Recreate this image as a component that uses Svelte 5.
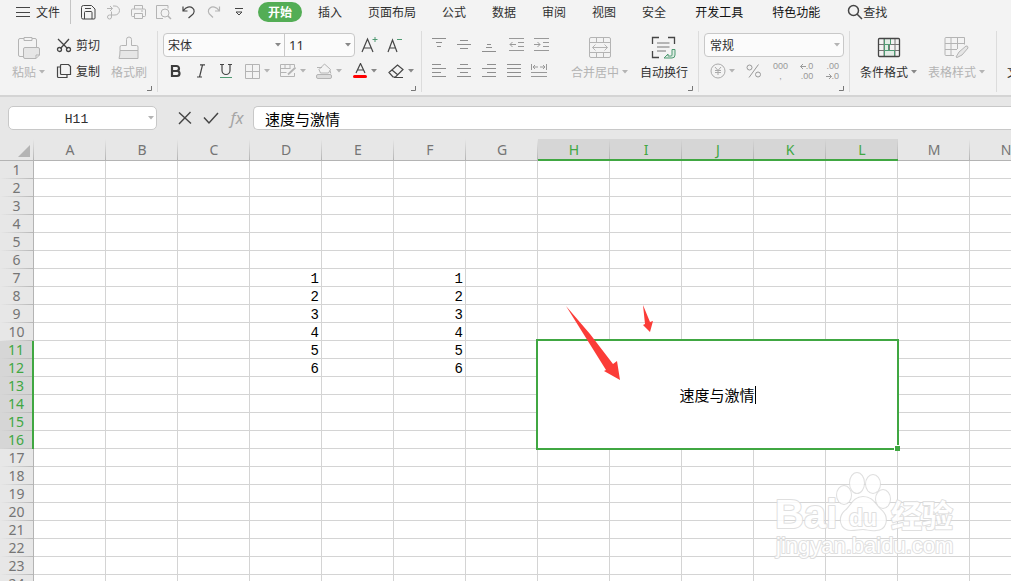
<script>
  const G = '#b4b4b4';
  const D = '#454545';
  const icons = {
    menu: [14, 12, `<path d="M0 1.500h14M0 6.500h14M0 10.500h14" stroke="${D}"/>`],
    save: [15, 15, `<path d="M2.500 .5h8l3.500 3.500v9a1 1 0 0 1-1 1H2a1.500 1.500 0 0 1-1.500-1.500v-10a2 2 0 0 1 2-2zM3.500 14V7.500a1 1 0 0 1 1-1H10a1 1 0 0 1 1 1V14M4 3.500h6" stroke="${D}"/>`],
    exportPdf: [15, 15, `<path d="M1 3.500h5M4 1l2.500 2.500L4 6M7 1h2a4.500 4.500 0 0 1 0 9H3.500a2 2 0 1 0 2 2V6.500" stroke="${G}"/>`],
    print: [15, 15, `<path d="M3.500 4V.5h8V4M3 11.500H1.500a1 1 0 0 1-1-1V5a1 1 0 0 1 1-1h12a1 1 0 0 1 1 1v5.500a1 1 0 0 1-1 1H12M3.500 8.500h8v5h-8zM10 6h2" stroke="${G}"/>`],
    preview: [16, 15, `<path d="M4 13.500H.5V.5h11.500v3M.5 13.500H7" stroke="${G}"/><circle cx="9" cy="8" r="4" stroke="${G}"/><path d="M12 11l3 3" stroke="${G}" stroke-width="1.500"/>`],
    undo: [14, 14, `<path d="M1 1.500V6h4.500M1.500 5.500C4 2 8 1 10.500 3s2 5-.5 7L6.500 13" stroke="${D}" stroke-width="1.200"/>`],
    redo: [14, 14, `<path d="M12.500 1.500V6H8M12 5.500C9.500 2 5.500 1 3 3s-2 5 .5 7L6 12.500" stroke="${G}" stroke-width="1.200"/>`],
    more: [8, 10, `<path d="M0 1.500h8M1 5l3 3 3-3z" stroke="${D}"/>`],
    search: [16, 16, `<circle cx="6.500" cy="6.500" r="5" stroke="${D}" stroke-width="1.500"/><path d="M10 10l5 5" stroke="${D}" stroke-width="1.500"/>`],
    paste: [24, 24, `<path d="M7 2.500H3a1.500 1.500 0 0 0-1.500 1.500v15A1.500 1.500 0 0 0 3 20.500h3.500M15 2.500h3A1.500 1.500 0 0 1 19.500 4v7M7 1.500h8v3H7z" stroke="${G}"/><path d="M8 11.500h13a1.500 1.500 0 0 1 1.500 1.500v6l-3.500 3.500H8A1.500 1.500 0 0 1 6.500 21v-8A1.500 1.500 0 0 1 8 11.500zM22.500 19H19v3.500" stroke="${G}" fill="#e6e6e6"/>`],
    cut: [16, 15, `<path d="M2 1l9.500 9.500M13 1L4.500 10.500" stroke="${D}" stroke-width="1.300"/><circle cx="3.500" cy="11.500" r="2" stroke="${D}" stroke-width="1.300"/><circle cx="12.500" cy="11.500" r="2" stroke="${D}" stroke-width="1.300"/>`],
    copy: [16, 16, `<path d="M5.500 1.500h7l2 2v8h-9a1 1 0 0 1-1-1v-8a1 1 0 0 1 1-1z" stroke="${D}" stroke-width="1.200"/><path d="M4 4H1.500v9.500a1 1 0 0 0 1 1H11V12" stroke="${D}" stroke-width="1.200"/>`],
    painter: [22, 24, `<path d="M8.500 9.500v-6a2.500 2.500 0 0 1 5 0v6h5a1.500 1.500 0 0 1 1.500 1.500v3.500H2V11A1.500 1.500 0 0 1 3.500 9.500z" stroke="${G}"/><path d="M2 14.500h18v8H1q1-3 1-8z" stroke="${G}" fill="#e6e6e6"/>`],
    bigA: [17, 18, `<path d="M1 16L6.500 3 12 16M3 12h7" stroke="${D}" stroke-width="1.200"/><path d="M14 1v5M11.500 3.500h5" stroke="#4f9a72"/>`],
    smallA: [16, 18, `<path d="M1 16L5.500 4 10 16M2.500 12h6" stroke="${D}" stroke-width="1.200"/><path d="M10 3.500h5" stroke="#4f9a72"/>`],
    bold: [12, 14, `<path d="M2 2h4.500a2.300 2.300 0 0 1 0 5H2zM2 7h5a2.500 2.500 0 0 1 0 5H2z" stroke="#3c3c3c" stroke-width="2.200"/>`],
    italic: [10, 14, `<path d="M4 .8h5M1 13h5M6.500 1l-3 12" stroke="${D}" stroke-width="1.200"/>`],
    underline: [12, 15, `<path d="M2 .5v6a4 4 0 0 0 8 0v-6M0 .5h4M8 .5h4" stroke="${D}" stroke-width="1.200"/><path d="M0 13.500h12" stroke="#4f9a72"/>`],
    borders: [16, 15, `<path d="M.5 .5h14v14H.5zM7.500 .5v14M.5 7.500h14" stroke="${G}"/>`],
    drawBorder: [17, 16, `<path d="M14.500 4V1.500H.5v12h14V10M.5 5.500h10M.5 9.500h6M5 1.500v4M10 1.500v4" stroke="${G}"/><path d="M8 11.500l7.500-7" stroke="${G}" stroke-width="1.800"/>`],
    fill: [17, 16, `<path d="M1 4.500h5M3 6.500L8.500 1l6 5.500-2 3.500H4.500zM14 7.500l.8 3" stroke="${G}"/><rect x=".5" y="11.500" width="15" height="4" rx="1.500" fill="#dcdcdc" stroke="${G}"/>`],
    fontColor: [15, 16, `<path d="M3 10L7.500 .5 12 10M4.500 7h6" stroke="${D}" stroke-width="1.200"/><rect y="12" width="14" height="3" rx="1.500" fill="#f00"/>`],
    eraser: [17, 15, `<path d="M1 8.500L9.500 1l5.500 4.500L7.500 13H5zM4 6l6 5M6 13.500h9" stroke="${D}" stroke-width="1.200"/>`],
    vTop: [14, 14, `<path d="M0 .5h14M4 4.500h6M5 8.500h4" stroke="#8e8e8e"/>`],
    vMid: [14, 14, `<path d="M3 2.500h8M0 6.500h14M3 10.500h8" stroke="#8e8e8e"/>`],
    vBot: [14, 14, `<path d="M5 6.500h4M4 9.500h6M0 13.500h14" stroke="#8e8e8e"/>`],
    outdent: [15, 14, `<path d="M0 .5h15M9 4.500h6M9 8.500h6M0 12.500h15M1 6.500h6M3.500 4L1 6.500 3.500 9" stroke="#999"/>`],
    indent: [15, 14, `<path d="M0 .5h15M9 4.500h6M9 8.500h6M0 12.500h15M0 6.500h6M3.500 4L6 6.500 3.500 9" stroke="#999"/>`],
    hLeft: [14, 14, `<path d="M0 .5h9M0 4.500h14M0 8.500h9M0 12.500h14" stroke="#8e8e8e"/>`],
    hMid: [14, 14, `<path d="M3 .5h8M0 4.500h14M3 8.500h8M0 12.500h14" stroke="#8e8e8e"/>`],
    hRight: [14, 14, `<path d="M5 .5h9M0 4.500h14M5 8.500h9M0 12.500h14" stroke="#8e8e8e"/>`],
    justify: [14, 14, `<path d="M0 .5h14M0 4.500h14M0 8.500h14M0 12.500h14" stroke="#8e8e8e"/>`],
    spread: [16, 14, `<path d="M.5 0v6M15.500 0v6M2 3h5M4 1L2 3l2 2M9 3h5M12 1l2 2-2 2M0 8.500h16M0 12.500h16" stroke="#999"/>`],
    merge: [24, 24, `<rect x="1.500" y="1.500" width="21" height="20" rx="1.500" stroke="${G}"/><path d="M1.500 6.500h21M1.500 16.500h21M8.500 1.500v5M15.500 1.500v5M8.500 16.500v5M15.500 16.500v5M4.500 11.500h15M7.500 8.500l-3 3 3 3M16.500 8.500l3 3-3 3" stroke="${G}"/>`],
    wrap: [26, 24, `<path d="M1.500 8V1.500H8M17 1.500h6.500V8M1.500 15v6.500H8" stroke="${D}" stroke-width="1.300"/><path d="M6 7h12.500M6 11h12.500M6 15h9" stroke="#777"/><path d="M21 13.500h3V19q0 3-3 3h-8l4-4v2h3q1 0 1-1z" stroke="#4f9a72" fill="#dcebe2"/>`],
    yen: [16, 16, `<circle cx="8" cy="8" r="7" stroke="#aaa"/><path d="M5 4l3 3.500L11 4M8 7.500V12M5 7.500h6M5 9.500h6" stroke="#aaa"/>`],
    percent: [16, 16, `<path d="M12.500 1.500L3 14.500" stroke="#999"/><circle cx="3.500" cy="4.500" r="2.500" stroke="#999"/><circle cx="12" cy="11.500" r="2.500" stroke="#999"/>`],
    toLeft: [6, 5, `<path d="M6 2.500H.5M3 0L.5 2.500 3 5" stroke="#999"/>`],
    toRight: [6, 5, `<path d="M0 2.500h5.500M3 0l2.500 2.500L3 5" stroke="#999"/>`],
    condFormat: [24, 22, `<path d="M2 7.500h20M2 13.500h20M7 2v17M18 2v17M12.500 2v17" stroke="#777"/><path d="M7.500 1.500h6v6h-6zM7.500 7.500h4v6h-4zM7.500 13.500h10v6h-10z" fill="#e2ece6" stroke="#4f9a72"/><rect x="1.500" y="1.500" width="21" height="18" rx="1" stroke="${D}" stroke-width="1.300"/>`],
    tableStyle: [26, 24, `<path d="M10 19.500H2a1 1 0 0 1-1-1v-16a1 1 0 0 1 1-1h18.500v7M1 7.500h19M1 13.500h12M7 2v17M13.500 2v11" stroke="${G}"/><path d="M12 21l3-5 7-6q2-.5 2 2l-6 7-5 2.500z" fill="#e6e6e6" stroke="${G}"/>`],
    cancel: [14, 14, `<path d="M1 1.500l12 11M12.500 1L1 13" stroke="${D}" stroke-width="1.400"/>`],
    check: [16, 14, `<path d="M1 6.500L6 12 15 2" stroke="${D}" stroke-width="1.500"/>`]
  };

  const quick = [
    ['save', '保存'], ['exportPdf', '输出为PDF'], ['print', '打印'], ['preview', '打印预览'],
    ['undo', '撤销'], ['redo', '恢复'], ['more', '自定义']
  ];
  const tabs = ['插入', '页面布局', '公式', '数据', '审阅', '视图', '安全'];
  const extraTabs = ['开发工具', '特色功能'];
  const fontTools = [['borders', '边框', true], ['drawBorder', '绘图边框', true], ['fill', '填充颜色', true], ['fontColor', '字体颜色', false], ['eraser', '清除', false]];
  const alignTop = [['vTop', '顶端对齐'], ['vMid', '垂直居中'], ['vBot', '底端对齐']];
  const indents = [['outdent', '减少缩进'], ['indent', '增加缩进']];
  const alignBottom = [['hLeft', '左对齐'], ['hMid', '水平居中'], ['hRight', '右对齐'], ['justify', '两端对齐'], ['spread', '分散对齐']];

  const cols = 'ABCDEFGHIJKLMN'.split('');
  const rows = Array.from({ length: 24 }, (_, i) => i + 1);
  const isCol = (c) => c >= 'H' && c <= 'L';
  const isRow = (r) => r >= 11 && r <= 16;
  const value = (c, r) => ((c === 'D' || c === 'F') && r >= 7 && r <= 12 ? r - 6 : '');

  let nameBox = $state('H11');
  let content = $state('速度与激情');
</script>

{#snippet icon(name)}
  <svg class="icon" width={icons[name][0]} height={icons[name][1]} viewBox="0 0 {icons[name][0]} {icons[name][1]}" fill="none" aria-hidden="true">{@html icons[name][2]}</svg>
{/snippet}

{#snippet caret()}
  <svg class="caret" width="6" height="4" viewBox="0 0 6 4" aria-hidden="true"><path d="M0 0h6L3 3.500z" fill="currentColor" /></svg>
{/snippet}

{#snippet corner()}
  <svg class="corner" width="5" height="5" viewBox="0 0 5 5" fill="none" aria-hidden="true"><path d="M4.500 0v4.500H0" stroke="#777" /></svg>
{/snippet}

<div class="app">
  <nav class="menubar">
    <button class="file">{@render icon('menu')}文件</button>
    <div class="quick">
      {#each quick as [name, label]}
        <button aria-label={label}>{@render icon(name)}</button>
      {/each}
    </div>
    <button class="active">开始</button>
    <div class="tabs">
      {#each tabs as tab}<button>{tab}</button>{/each}
    </div>
    <div class="tabs extra">
      {#each extraTabs as tab}<button>{tab}</button>{/each}
    </div>
    <button class="find">{@render icon('search')}查找</button>
  </nav>

  <div class="ribbon">
    <section class="group clipboard">
      <button class="big dim">{@render icon('paste')}<span>粘贴{@render caret()}</span></button>
      <div class="stack">
        <button class="small">{@render icon('cut')}剪切</button>
        <button class="small">{@render icon('copy')}复制</button>
      </div>
      <button class="big dim">{@render icon('painter')}<span>格式刷</span></button>
      {@render corner()}
    </section>

    <section class="group font">
      <div class="stack">
        <div class="line">
          <div class="pair">
            <label class="pick family"><select aria-label="字体"><option>宋体</option></select>{@render caret()}</label>
            <label class="pick size"><select aria-label="字号"><option>11</option></select>{@render caret()}</label>
          </div>
          <button class="tool" aria-label="增大字号">{@render icon('bigA')}</button>
          <button class="tool" aria-label="减小字号">{@render icon('smallA')}</button>
        </div>
        <div class="line">
          <button class="tool" aria-label="加粗">{@render icon('bold')}</button>
          <button class="tool" aria-label="倾斜">{@render icon('italic')}</button>
          <button class="tool" aria-label="下划线">{@render icon('underline')}</button>
          <div class="splits">
            {#each fontTools as [name, label, dim]}
              <button class="split" class:dim aria-label={label}>{@render icon(name)}{@render caret()}</button>
            {/each}
          </div>
        </div>
      </div>
      {@render corner()}
    </section>

    <section class="group align">
      <div class="stack">
        <div class="line spaced">
          <div class="line">
            {#each alignTop as [name, label]}<button class="tool" aria-label={label}>{@render icon(name)}</button>{/each}
          </div>
          <div class="line">
            {#each indents as [name, label]}<button class="tool" aria-label={label}>{@render icon(name)}</button>{/each}
          </div>
        </div>
        <div class="line">
          {#each alignBottom as [name, label]}<button class="tool" aria-label={label}>{@render icon(name)}</button>{/each}
        </div>
      </div>
      <button class="big dim">{@render icon('merge')}<span>合并居中{@render caret()}</span></button>
      <button class="big">{@render icon('wrap')}<span>自动换行</span></button>
      {@render corner()}
    </section>

    <section class="group number">
      <div class="stack">
        <div class="line">
          <label class="pick format"><select aria-label="数字格式"><option>常规</option></select>{@render caret()}</label>
        </div>
        <div class="line digits">
          <button class="split dim" aria-label="货币">{@render icon('yen')}{@render caret()}</button>
          <button class="tool" aria-label="百分比">{@render icon('percent')}</button>
          <button class="places"><span>000</span><span>,</span></button>
          <button class="places end"><span>{@render icon('toLeft')}.0</span><span>.00</span></button>
          <button class="places end"><span>.00</span><span>{@render icon('toRight')}.0</span></button>
        </div>
      </div>
      {@render corner()}
    </section>

    <section class="group style">
      <button class="big">{@render icon('condFormat')}<span>条件格式{@render caret()}</span></button>
      <button class="big dim">{@render icon('tableStyle')}<span>表格样式{@render caret()}</span></button>
    </section>

    <section class="group last">
      <button class="big"><span>文本</span></button>
    </section>
  </div>

  <div class="formula">
    <label class="box name"><input aria-label="名称框" bind:value={nameBox} />{@render caret()}</label>
    <div class="actions">
      <button aria-label="取消">{@render icon('cancel')}</button>
      <button aria-label="输入">{@render icon('check')}</button>
      <button class="fx">fx</button>
    </div>
    <label class="box value"><input aria-label="编辑栏" bind:value={content} /></label>
  </div>

  <main class="sheet">
    <table>
      <colgroup><col class="head" />{#each cols as c}<col />{/each}</colgroup>
      <thead>
        <tr>
          <th class="all"><svg width="12" height="12" viewBox="0 0 12 12" aria-hidden="true"><path d="M12 0v12H0z" fill="#b4b4b4" /></svg></th>
          {#each cols as c}<th class:on={isCol(c)} scope="col">{c}</th>{/each}
        </tr>
      </thead>
      <tbody>
        {#each rows as r}
          <tr>
            <th class:on={isRow(r)} scope="row">{r}</th>
            {#each cols as c}
              {#if isRow(r) && isCol(c)}
                {#if r === 11 && c === 'H'}
                  <td class="merged" colspan="5" rowspan="6">
                    <span class="edit">{content}</span>
                    <i class="frame"></i><i class="handle"></i>
                  </td>
                {/if}
              {:else}
                <td>{value(c, r)}</td>
              {/if}
            {/each}
          </tr>
        {/each}
      </tbody>
    </table>

    <svg class="arrows" width="90" height="80" viewBox="0 0 90 80" aria-hidden="true">
      <path d="M0 1L40 65 38 66 54 75 51 56 47 59 24 29zM77 0L79 19 77 20 84 27 87 16 84 17z" fill="#fb3c38" />
    </svg>

    <svg class="mark" width="190" height="92" viewBox="0 0 190 92">
      <g fill="#fff" stroke="#dadada" stroke-width="2" stroke-linejoin="round" paint-order="stroke">
        <text class="latin" x="3" y="57" font-size="40">Bai</text>
        <ellipse cx="72" cy="24" rx="7" ry="9" /><ellipse cx="85" cy="12" rx="7" ry="10" />
        <ellipse cx="101" cy="13" rx="7" ry="9" /><ellipse cx="111" cy="28" rx="7" ry="9" />
        <path d="M91 26c-10 0-12 10-18 14-7 6-5 19 6 19 5 0 8-1 12-1s8 2 13 1c10 0 13-12 6-19-7-6-9-14-19-14z" />
        <text class="latin" x="77" y="55" font-size="23">du</text>
        <text class="cjk" x="119" y="56" font-size="31">经验</text>
        <text class="url" x="4" y="82" font-size="22">jingyan.baidu.com</text>
      </g>
    </svg>
  </main>
</div>

<style>
  :global(body) { overflow: hidden; }
  .app {
    display: flex; flex-direction: column; height: 100vh; overflow: hidden;
    background: #e7e7e7; color: #303030;
    font: 12px/16px "Noto Sans CJK SC", sans-serif;
  }
  button, input, select { font: inherit; color: inherit; border: 0; padding: 0; margin: 0; background: none; border-radius: 0; }
  button { display: inline-flex; align-items: center; justify-content: center; white-space: nowrap; flex: none; }
  .icon, .caret { display: block; flex: none; }
  .caret { color: #888; }

  .menubar { display: flex; align-items: center; height: 24px; flex: none; background: #f3f3f3; overflow: hidden; }
  .file { gap: 6px; padding: 0 10px 0 16px; height: 24px; border-right: 1px solid #c4c4c4; }
  .quick { display: flex; padding: 0 7px 0 5px; }
  .quick button { width: 25px; height: 24px; }
  .active { width: 44px; height: 20px; border-radius: 10px; background: #53ad55; color: #fff; font-weight: 700; }
  .tabs { display: flex; gap: 26px; padding-left: 16px; }
  .extra { gap: 29px; padding: 0 27px 0 29px; color: #111; }

  .ribbon { display: flex; flex: none; height: 70px; padding-bottom: 1px; background: #f3f3f3; border-bottom: 2px solid #d4d4d4; overflow: hidden; }
  .group { display: flex; position: relative; flex: none; margin: 7px 0 2px; border-right: 1px solid #dcdcdc; }
  .corner { position: absolute; right: 5px; bottom: 1px; }
  .stack { display: flex; flex-direction: column; gap: 2px; padding-top: 2px; }
  .line { display: flex; align-items: center; height: 24px; }
  .spaced { gap: 3px; margin-right: -3px; }
  .small { height: 24px; gap: 4px; }
  .big { flex-direction: column; justify-content: flex-start; gap: 4px; padding-top: 5px; }
  .big span { display: flex; align-items: center; gap: 3px; }
  .big .icon { height: 24px; }
  .dim, .dim .caret { color: #b4b4b4; }
  .tool { width: 25px; height: 24px; }
  .split { width: 36px; height: 24px; gap: 3px; }
  .splits { display: flex; padding-left: 1px; }

  .clipboard { gap: 11px; padding: 0 10px 0 12px; }
  .font { padding: 0 14px 0 5px; }
  .font .stack { width: 244px; }
  .pair { display: flex; margin-right: 2px; border: 1px solid #c8c8c8; border-radius: 4px; background: #fbfbfb; }
  .pick { display: grid; align-items: center; height: 22px; }
  .pick select { grid-area: 1 / 1; width: 100%; height: 22px; padding-left: 4px; appearance: none; outline: 0; }
  .pick .caret { grid-area: 1 / 1; justify-self: end; margin-right: 3px; pointer-events: none; }
  .family { width: 120px; border-right: 1px solid #c8c8c8; }
  .size { width: 69px; font-size: 13px; font-family: "Noto Sans", sans-serif; }
  .format { width: 138px; border: 1px solid #c8c8c8; border-radius: 4px; background: #fbfbfb; }
  .format .caret { color: #b4b4b4; }
  .align { padding: 0 10px 0 4px; }
  .align .stack { width: 125px; margin-right: 20px; }
  .align .big + .big { margin-left: 12px; }
  .number { padding: 0 5px; }
  .format select { padding-left: 5px; }
  .digits { justify-content: space-between; color: #999; }
  .places { flex-direction: column; width: 24px; font: 9px/10px "Liberation Sans", sans-serif; }
  .places span { display: flex; align-items: center; height: 10px; }
  .places.end { align-items: flex-end; padding-right: 5px; }
  .style { gap: 11px; padding: 0 11px 0 10px; }
  .last { padding-left: 10px; border: 0; }
  .last .big { padding-top: 33px; }

  .formula { display: flex; align-items: center; flex: none; height: 32px; padding: 5px 0 5px 8px; }
  .box { display: grid; align-items: center; height: 22px; border: 1px solid #c8c8c8; border-radius: 5px; background: #fff; }
  .box input { grid-area: 1 / 1; width: 100%; min-width: 0; height: 22px; outline: 0; box-sizing: border-box; }
  .box .caret { grid-area: 1 / 1; justify-self: end; margin-right: 2px; color: #b4b4b4; }
  .name { width: 147px; flex: none; }
  .name input { padding: 2px 12px 0 0; text-align: center; font: 13px "Liberation Mono", monospace; }
  .actions { display: flex; padding: 0 3px 0 15px; }
  .actions button { width: 26px; height: 22px; }
  .actions .fx { font: italic 16px "Noto Sans", sans-serif; color: #a4a4a4; }
  .value { flex: 1; border-right: 0; border-radius: 5px 0 0 5px; }
  .value input { padding-left: 11px; font-size: 15px; color: #000; }

  .sheet { position: relative; flex: 1; min-height: 0; overflow: hidden; background: #fff; }
  table { table-layout: fixed; width: 1042px; border-spacing: 0; }
  col { width: 72px; }
  col.head { width: 34px; }
  th, td { box-sizing: border-box; height: 18px; padding: 0; }
  th { font: 14px/17px "Noto Sans", sans-serif; color: #757575; background: #e7e7e7; }
  thead th { height: 22px; border-bottom: 1px solid #b4b4b4; background: linear-gradient(transparent, #b4b4b4) right / 1px 100% no-repeat #e7e7e7; }
  tbody th { border-right: 1px solid #b4b4b4; line-height: 17px; padding-bottom: 1px; background: linear-gradient(90deg, transparent, #b8b8b8) bottom / 100% 1px no-repeat #e7e7e7; }
  th.on { color: #40a742; background-color: #d6d6d6; }
  thead th.on { border-bottom: 2px solid #40a742; }
  tbody th.on { border-right: 2px solid #40a742; }
  .all svg { display: block; margin: 2px 0 0 18px; }
  td { border: solid #d4d4d4; border-width: 0 1px 1px 0; padding: 3px 2px 0 0; text-align: right; font: 14px/14px "Liberation Mono", monospace; color: #000; }
  .merged { position: relative; padding: 0; text-align: center; font: 15px/18px "Noto Sans CJK SC", sans-serif; }
  .edit { display: inline-block; border-right: 1px solid #000; }
  .frame { position: absolute; inset: -2px; border: 2px solid #40a742; }
  .handle { position: absolute; right: -3px; bottom: -3px; width: 5px; height: 5px; background: #40a742; border: solid #fff; border-width: 1px 0 0 1px; }
  .arrows { position: absolute; left: 566px; top: 166px; }
  .mark { position: absolute; left: 772px; top: 332px; opacity: 0.85; }
  .latin { font-family: "Liberation Sans", sans-serif; font-weight: 700; }
  .cjk { font-family: "Noto Sans CJK SC", sans-serif; font-weight: 700; }
  .url { font-family: "Liberation Sans", sans-serif; }
</style>
